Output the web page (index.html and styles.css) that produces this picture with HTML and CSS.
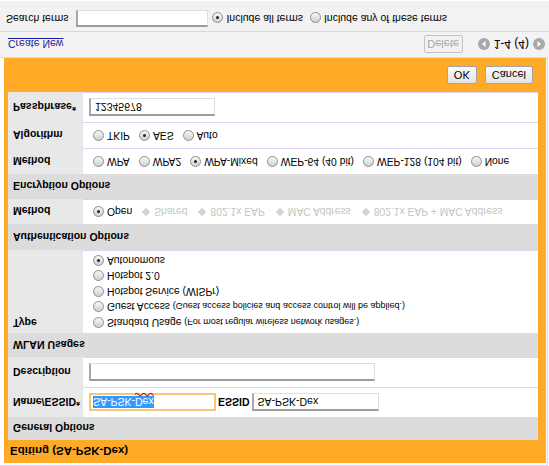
FILE: index.html
```html
<!DOCTYPE html>
<html>
<head>
    <title>Edit WLAN</title>
    <link rel="stylesheet" href="styles.css">
</head>
<body>
    <!-- whole page is shown upside down, like the screenshot -->
    <div class="page">
        <div class="wrap">
            <div class="editor">
                <div class="title">Editing (SA-PSK-Dex)</div>
                <div class="form">
                    <div class="section">General Options</div>
                    <div class="row h30">
                        <div class="label">Name/ESSID*</div>
                        <div class="value">
                            <span class="field focus w127"><span class="selected">SA-PSK-<span class="typo">Dex</span></span></span>
                            <b class="inline-label">ESSID</b>
                            <span class="field w127">SA-PSK-Dex</span>
                        </div>
                    </div>
                    <div class="row h30">
                        <div class="label">Description</div>
                        <div class="value"><span class="field w286"></span></div>
                    </div>
                    <div class="section h24">WLAN Usages</div>
                    <div class="row type-row">
                        <div class="label">Type</div>
                        <div class="value stack">
                            <span class="opt"><span class="radio"></span><span>Standard Usage <small>(For most regular wireless network usages.)</small></span></span>
                            <span class="opt"><span class="radio"></span><span>Guest Access <small>(Guest access policies and access control will be applied.)</small></span></span>
                            <span class="opt"><span class="radio"></span><span>Hotspot Service (WISPr)</span></span>
                            <span class="opt"><span class="radio"></span><span>Hotspot 2.0</span></span>
                            <span class="opt"><span class="radio on"></span><span>Autonomous</span></span>
                        </div>
                    </div>
                    <div class="section h26">Authentication Options</div>
                    <div class="row h25">
                        <div class="label">Method</div>
                        <div class="value">
                            <span class="opt"><span class="radio on"></span>Open</span>
                            <span class="opt off"><span class="diamond"></span>Shared</span>
                            <span class="opt off"><span class="diamond"></span>802.1x EAP</span>
                            <span class="opt off"><span class="diamond"></span>MAC Address</span>
                            <span class="opt off"><span class="diamond"></span>802.1x EAP + MAC Address</span>
                        </div>
                    </div>
                    <div class="section h25">Encryption Options</div>
                    <div class="row h26">
                        <div class="label">Method</div>
                        <div class="value">
                            <span class="opt"><span class="radio"></span>WPA</span>
                            <span class="opt"><span class="radio"></span>WPA2</span>
                            <span class="opt"><span class="radio on"></span>WPA-Mixed</span>
                            <span class="opt"><span class="radio"></span>WEP-64 (40 bit)</span>
                            <span class="opt"><span class="radio"></span>WEP-128 (104 bit)</span>
                            <span class="opt"><span class="radio"></span>None</span>
                        </div>
                    </div>
                    <div class="row h26">
                        <div class="label">Algorithm</div>
                        <div class="value">
                            <span class="opt"><span class="radio"></span>TKIP</span>
                            <span class="opt"><span class="radio on"></span>AES</span>
                            <span class="opt"><span class="radio"></span>Auto</span>
                        </div>
                    </div>
                    <div class="row h30">
                        <div class="label">Passphrase*</div>
                        <div class="value"><span class="field w126">12345678</span></div>
                    </div>
                </div>
                <div class="actions">
                    <span class="btn">OK</span>
                    <span class="btn">Cancel</span>
                </div>
            </div>
        </div>

        <div class="pager">
            <a class="create" href="#">Create New</a>
            <span class="btn disabled">Delete</span>
            <span class="nav">
                <svg width="12" height="12" viewBox="0 0 12 12"><circle cx="6" cy="6" r="6" fill="#a9a9a9"/><path d="M7.5 3 L4 6 L7.5 9 Z" fill="#fff"/></svg>
                <span class="count">1-4 (4)</span>
                <svg width="12" height="12" viewBox="0 0 12 12"><circle cx="6" cy="6" r="6" fill="#a9a9a9"/><path d="M4.5 3 L8 6 L4.5 9 Z" fill="#fff"/></svg>
            </span>
        </div>

        <div class="search">
            <span>Search terms</span>
            <span class="field w132"></span>
            <span class="radio on"></span><span>Include all terms</span>
            <span class="radio"></span><span>Include any of these terms</span>
        </div>
    </div>
</body>
</html>
```

FILE: styles.css
```css
body {
    margin: 0;
}

/* The screenshot is flipped top to bottom */
.page {
    width: 549px;
    height: 466px;
    overflow: hidden;
    transform: scaleY(-1);
    background: #fff;
    font-family: "Liberation Sans", Arial, sans-serif;
    font-size: 10.5px;
    color: #000;
}

.wrap {
    margin-right: 1px;
    padding: 2px 1px 0 4px;
    border-top: 1px solid #dad2f6;
    border-right: 1px solid #dad2f6;
    border-bottom: 1px solid #dad2f6;
}

/* Orange editing box */
.editor {
    background: #ffab28;
}

.title {
    height: 23px;
    padding-left: 6px;
    display: flex;
    align-items: center;
    font-size: 11.5px;
    font-weight: bold;
}

.form {
    margin: 0 8px 0 4px;
}

.section {
    height: 23px;
    padding-left: 5px;
    display: flex;
    align-items: center;
    background: #dcdcdc;
    font-weight: bold;
}

.row {
    display: grid;
    grid-template-columns: 75px 1fr;
}

.row .label {
    padding-left: 5px;
    display: flex;
    align-items: center;
    background: #e8e8e8;
    font-weight: bold;
}

.row .value {
    padding-left: 6px;
    display: flex;
    align-items: center;
    background: #fff;
    border-bottom: 1px solid #dcd4f7;
    white-space: nowrap;
}

.h24 { height: 24px; }
.h25 { height: 25px; }
.h26 { height: 26px; }
.h30 { height: 30px; }

.type-row {
    height: 83px;
}

.type-row .label {
    align-items: flex-start;
    padding-top: 4px;
}

.value.stack {
    flex-direction: column;
    align-items: flex-start;
    justify-content: flex-start;
    padding-top: 3px;
}

.stack .opt {
    height: 15.5px;
}

.stack small {
    font-size: 9px;
}

/* Radio buttons */
.opt {
    display: inline-flex;
    align-items: center;
    margin-right: 5px;
    font-size: 10.3px;
}

.opt.off {
    margin-right: 6px;
    color: #c4c4c4;
}

.radio {
    display: inline-block;
    flex: none;
    box-sizing: border-box;
    width: 11px;
    height: 11px;
    margin: 0 3px 0 4px;
    border: 1px solid #8e8e8e;
    border-radius: 50%;
    background: linear-gradient(#cfcfcf, #f8f8f8);
    position: relative;
}

.radio.on::after {
    content: "";
    position: absolute;
    left: 3px;
    top: 3px;
    width: 3px;
    height: 3px;
    border-radius: 50%;
    background: #222;
}

.diamond {
    display: inline-block;
    width: 6px;
    height: 6px;
    margin: 0 5px 0 6px;
    background: #d2d2d2;
    transform: rotate(45deg);
}

/* Text fields */
.field {
    display: inline-flex;
    align-items: center;
    box-sizing: border-box;
    height: 18px;
    padding: 0 4px;
    background: #fff;
    border: 1px solid #dedede;
    border-top: 2px solid #9c9c9c;
    border-left: 2px solid #a8a8a8;
}

.field.focus {
    border: 2px solid #f2c67c;
    padding: 0 2px;
}

.selected {
    background: #3399ff;
    color: #fff;
}

.typo {
    text-decoration: underline wavy #e00000;
}

.w126 { width: 126px; }
.w127 { width: 127px; }
.w132 { width: 132px; }
.w286 { width: 286px; }

.inline-label {
    margin: 0 2px;
}

/* OK / Cancel bar */
.actions {
    height: 34px;
    padding-right: 13px;
    display: flex;
    justify-content: flex-end;
    align-items: center;
    gap: 8px;
}

.btn {
    display: inline-flex;
    align-items: center;
    justify-content: center;
    box-sizing: border-box;
    height: 18px;
    padding: 0 6px;
    border: 1px solid #a4a4a4;
    border-radius: 2px;
    background: linear-gradient(#e4e4e4, #fbfbfb);
    font-size: 11px;
}

.btn.disabled {
    width: 39px;
    color: #a6a6a6;
    border-color: #c2c2c2;
    background: #f2f2f2;
}

/* Create New / paging row */
.pager {
    height: 25px;
    padding: 0 4px 0 8px;
    display: flex;
    align-items: center;
    background: #f3f3f3;
    border-bottom: 1px solid #dad2f6;
}

.create {
    color: #1c1ca0;
}

.pager .btn {
    margin-left: auto;
}

.nav {
    margin-left: 15px;
    display: flex;
    align-items: center;
    gap: 4px;
}

.count {
    font-size: 12px;
}

/* Search bar */
.search {
    height: 30px;
    padding: 4px 0 0 6px;
    box-sizing: border-box;
    display: flex;
    align-items: flex-start;
    background: #f2f2f2;
    line-height: 17px;
}

.search .field {
    height: 17px;
    margin: 0 0 0 8px;
}

.search .radio {
    margin: 4px 3px 0 4px;
}

.search .radio + span + .radio {
    margin-left: 7px;
}
```
